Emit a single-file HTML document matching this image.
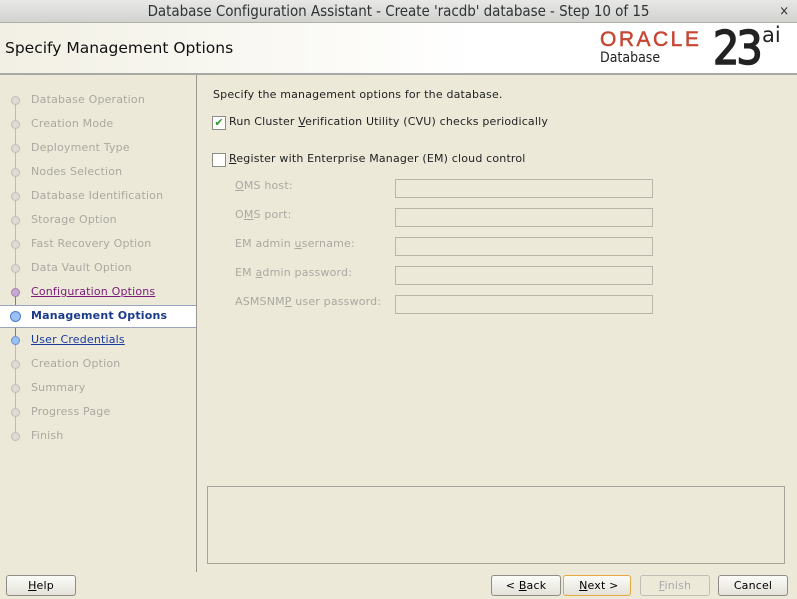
<!DOCTYPE html>
<html><head><style>
body{margin:0;width:797px;height:599px;overflow:hidden;background:#ece9d8;font-family:"DejaVu Sans","Liberation Sans",sans-serif;font-size:11px;position:relative;letter-spacing:0.18px}
.t{position:absolute;left:0;top:0;width:797px;height:22px;background:linear-gradient(#e8e8e6,#d2d2cf);border-bottom:1px solid #b0b0ab;text-align:center;font-family:"DejaVu Sans Condensed","DejaVu Sans",sans-serif;font-size:15px;line-height:23px;color:#2e3436;letter-spacing:-0.05px}
.x{position:absolute;right:8px;top:0;font-size:13px}
.h{position:absolute;left:0;top:23px;width:797px;height:50px;background:linear-gradient(90deg,#f2f0e4,#fff 60%);border-bottom:2px solid #a8a8a4}
.h .n{position:absolute;left:5px;top:16px;font-size:15.5px;font-family:"DejaVu Sans",sans-serif;color:#111;letter-spacing:0}
.s{position:absolute;left:31px;color:#aaa8a0;font-size:11px}
.d{position:absolute;left:11px;width:7px;height:7px;border-radius:50%;background:#e0ddd0;border:1px solid #bbb}
.ln{position:absolute;left:15px;width:1px;background:#bbb}
.f{position:absolute;left:395px;width:256px;height:17px;border:1px solid #b8b6ab;background:#ece9d8}
.fl{position:absolute;left:235px;color:#aaa8a0}
.b{position:absolute;top:575px;height:19px;border:1px solid #8e8c86;border-radius:3px;background:linear-gradient(#fbfbf9,#e4e2d8);text-align:center;line-height:19px;font-size:11px}
.cb{position:absolute;left:212px;width:12px;height:12px;border:1px solid #8e8c86;background:#fff}
</style></head><body>
<div class="t">Database Configuration Assistant - Create 'racdb' database - Step 10 of 15<span class="x">×</span></div>
<div class="h"><div class="n">Specify Management Options</div>
<div style="position:absolute;left:600px;top:5px;color:#c74634;font-size:21px;letter-spacing:2.5px;font-family:'Liberation Sans',sans-serif;-webkit-text-stroke:0.5px #c74634">ORACLE</div>
<div style="position:absolute;left:600px;top:27px;font-size:14px;color:#222;font-family:'DejaVu Sans Condensed',sans-serif;letter-spacing:0">Database</div>
<div style="position:absolute;left:713px;top:-2px;font-size:46px;color:#222;font-family:'DejaVu Sans Condensed',sans-serif;letter-spacing:-3px;-webkit-text-stroke:1.5px #222">23</div>
<div style="position:absolute;left:762px;top:0px;font-size:21px;color:#222;font-family:'DejaVu Sans',sans-serif;letter-spacing:0">ai</div>
</div>
<div style="position:absolute;left:196px;top:75px;width:1px;height:497px;background:#99978f"></div>
<div class="ln" style="top:100px;height:192px"></div>
<div class="ln" style="top:292px;height:48px;background:#6677cc"></div>
<div class="ln" style="top:340px;height:96px"></div>
<div style="position:absolute;left:0;top:305px;width:196px;height:21px;background:#fff;border-top:1px solid #98a4c0;border-bottom:1px solid #98a4c0"></div>
<div class="d" style="top:96px"></div><div class="s" style="top:93px">Database Operation</div>
<div class="d" style="top:120px"></div><div class="s" style="top:117px">Creation Mode</div>
<div class="d" style="top:144px"></div><div class="s" style="top:141px">Deployment Type</div>
<div class="d" style="top:168px"></div><div class="s" style="top:165px">Nodes Selection</div>
<div class="d" style="top:192px"></div><div class="s" style="top:189px">Database Identification</div>
<div class="d" style="top:216px"></div><div class="s" style="top:213px">Storage Option</div>
<div class="d" style="top:240px"></div><div class="s" style="top:237px">Fast Recovery Option</div>
<div class="d" style="top:264px"></div><div class="s" style="top:261px">Data Vault Option</div>
<div class="d" style="top:288px;background:#c8a8d0;border-color:#a080b0"></div><div class="s" style="top:285px;color:#7a1a7a;text-decoration:underline">Configuration Options</div>
<div class="d" style="top:311px;left:10px;width:9px;height:9px;background:#9cc0f0;border-color:#4a7ad0"></div><div class="s" style="top:309px;color:#1a3a8a;font-weight:bold">Management Options</div>
<div class="d" style="top:336px;background:#9cc0f0;border-color:#6a90d0"></div><div class="s" style="top:333px;color:#1a3aa0;text-decoration:underline">User Credentials</div>
<div class="d" style="top:360px"></div><div class="s" style="top:357px">Creation Option</div>
<div class="d" style="top:384px"></div><div class="s" style="top:381px">Summary</div>
<div class="d" style="top:408px"></div><div class="s" style="top:405px">Progress Page</div>
<div class="d" style="top:432px"></div><div class="s" style="top:429px">Finish</div>
<div style="position:absolute;left:213px;top:88px;color:#222">Specify the management options for the database.</div>
<div class="cb" style="top:116px;color:#2a9a2a;font-size:11px;line-height:12px;text-align:center;letter-spacing:0">✔</div>
<div style="position:absolute;left:229px;top:115px;color:#222">Run Cluster <u>V</u>erification Utility (CVU) checks periodically</div>
<div class="cb" style="top:153px"></div>
<div style="position:absolute;left:229px;top:152px;color:#222"><u>R</u>egister with Enterprise Manager (EM) cloud control</div>
<div class="fl" style="top:179px"><u>O</u>MS host:</div><div class="f" style="top:179px"></div>
<div class="fl" style="top:208px">O<u>M</u>S port:</div><div class="f" style="top:208px"></div>
<div class="fl" style="top:237px">EM admin <u>u</u>sername:</div><div class="f" style="top:237px"></div>
<div class="fl" style="top:266px">EM <u>a</u>dmin password:</div><div class="f" style="top:266px"></div>
<div class="fl" style="top:295px">ASMSNM<u>P</u> user password:</div><div class="f" style="top:295px"></div>
<div style="position:absolute;left:207px;top:486px;width:576px;height:76px;border:1px solid #a8a69c;background:#ece9d8"></div>
<div class="b" style="left:6px;width:68px"><u>H</u>elp</div>
<div class="b" style="left:491px;width:68px">&lt; <u>B</u>ack</div>
<div class="b" style="left:563px;width:66px;border-color:#e8a840">&nbsp;<u>N</u>ext &gt;</div>
<div class="b" style="left:640px;width:68px;color:#aaa;border-color:#c0beb4;background:#ece9d8"><u>F</u>inish</div>
<div class="b" style="left:718px;width:68px">Cancel</div>
</body></html>
